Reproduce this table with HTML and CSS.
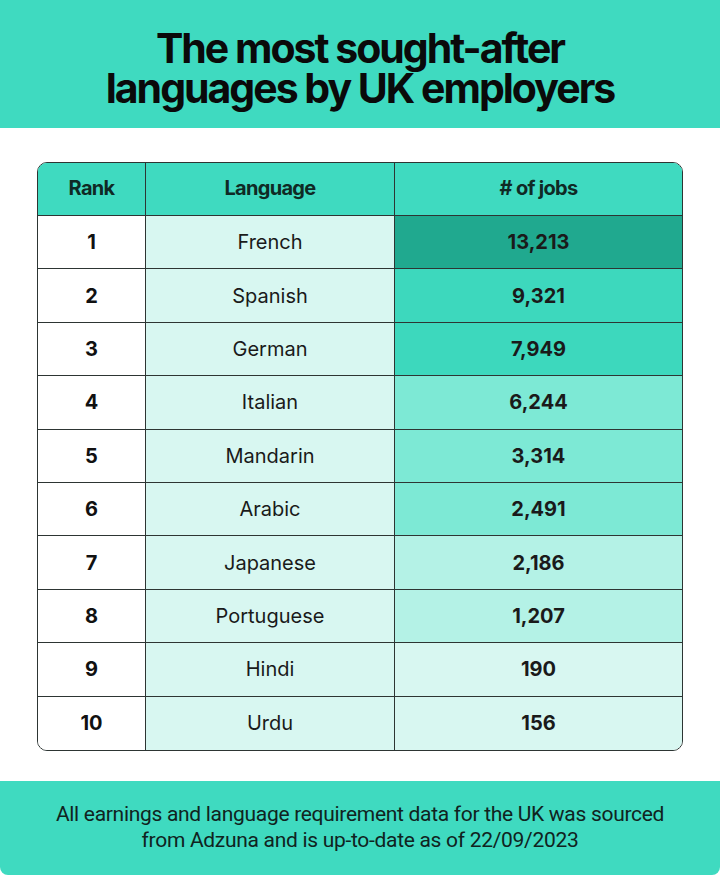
FILE: index.html
```html
<!DOCTYPE html>
<html lang="en">
<head>
<meta charset="utf-8">
<title>The most sought-after languages by UK employers</title>
<link rel="stylesheet" href="styles.css">
</head>
<body>
<div class="page">
  <header class="banner">
    <h1 class="title">The most sought-after<br>languages by UK employers</h1>
  </header>
  <main class="content">
    <div class="table">
      <div class="row head">
        <div class="cell rank">Rank</div>
        <div class="cell lang">Language</div>
        <div class="cell jobs">#&nbsp;of jobs</div>
      </div>
      <div class="row"><div class="cell rank">1</div><div class="cell lang">French</div><div class="cell jobs t1">13,213</div></div>
      <div class="row"><div class="cell rank">2</div><div class="cell lang">Spanish</div><div class="cell jobs t2">9,321</div></div>
      <div class="row"><div class="cell rank">3</div><div class="cell lang">German</div><div class="cell jobs t2">7,949</div></div>
      <div class="row"><div class="cell rank">4</div><div class="cell lang">Italian</div><div class="cell jobs t3">6,244</div></div>
      <div class="row"><div class="cell rank">5</div><div class="cell lang">Mandarin</div><div class="cell jobs t3">3,314</div></div>
      <div class="row"><div class="cell rank">6</div><div class="cell lang">Arabic</div><div class="cell jobs t3">2,491</div></div>
      <div class="row"><div class="cell rank">7</div><div class="cell lang">Japanese</div><div class="cell jobs t4">2,186</div></div>
      <div class="row"><div class="cell rank">8</div><div class="cell lang">Portuguese</div><div class="cell jobs t4">1,207</div></div>
      <div class="row"><div class="cell rank">9</div><div class="cell lang">Hindi</div><div class="cell jobs t5">190</div></div>
      <div class="row last"><div class="cell rank">10</div><div class="cell lang">Urdu</div><div class="cell jobs t5">156</div></div>
    </div>
  </main>
  <footer class="note">
    <p>All earnings and language requirement data for the UK was sourced<br>from Adzuna and is up-to-date as of 22/09/2023</p>
  </footer>
</div>
</body>
</html>
```

FILE: styles.css
```css
* { box-sizing: border-box; }
html, body { margin: 0; padding: 0; background: #ffffff; }
body { font-family: Inter, "Open Sans", sans-serif; color: #111; }
.page { width: 720px; height: 875px; display: flex; flex-direction: column; }

.banner {
  height: 128px;
  background: #3fdac0;
  display: flex;
  align-items: center;
  justify-content: center;
  padding-top: 8px;
}
.title {
  margin: 0;
  text-align: center;
  font-family: Inter, sans-serif;
  font-weight: 700;
  font-size: 41px;
  line-height: 40px;
  letter-spacing: -2px;
  color: #0a0a0a;
}

.content {
  padding: 34px 37px 0 37px;
  height: 653px;
}
.table {
  width: 646px;
  border: 1.5px solid #2d3533;
  border-radius: 10px;
  overflow: hidden;
  display: flex;
  flex-direction: column;
}
.row {
  display: grid;
  grid-template-columns: 108px 249px 1fr;
  height: 53.4px;
  border-bottom: 1.5px solid #2d3533;
}
.row.last { border-bottom: none; }
.row.head { height: 53px; background: #3fdac0; }
.cell {
  display: flex;
  align-items: center;
  justify-content: center;
  font-size: 20px;
}
.cell.rank { border-right: 1.5px solid #2d3533; font-weight: 700; background: #ffffff; }
.cell.lang { border-right: 1.5px solid #2d3533; background: #d8f7f1; font-weight: 400; color: #1a1a1a; }
.cell.jobs { font-weight: 700; color: #1a1a1a; }
.head .cell { background: #3fdac0; font-weight: 700; letter-spacing: -0.7px; color: #0f2a25; padding-bottom: 2px; }
.t1 { background: #20a98f; }
.t2 { background: #3dd8bd; }
.t3 { background: #7de9d5; }
.t4 { background: #b4f2e6; }
.t5 { background: #d8f7f1; }

.note {
  height: 94px;
  background: #3fdac0;
  border-radius: 0 0 8px 8px;
  display: flex;
  align-items: center;
  justify-content: center;
  padding-bottom: 2px;
}
.note p {
  margin: 0;
  text-align: center;
  font-family: Roboto, sans-serif;
  font-size: 21px;
  line-height: 26px;
  letter-spacing: -0.3px;
  color: #102320;
}
```
